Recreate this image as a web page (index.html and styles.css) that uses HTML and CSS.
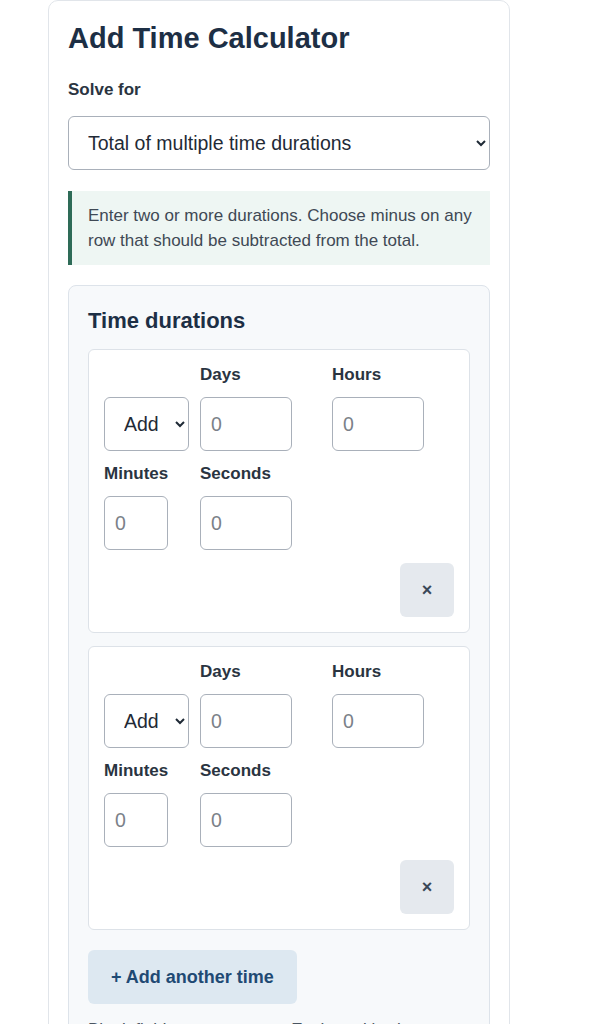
FILE: index.html
```html
<!DOCTYPE html>
<html lang="en">
<head>
<meta charset="utf-8">
<title>Add Time Calculator</title>
<link rel="stylesheet" href="styles.css">
</head>
<body>
<main class="calc">
  <h1 class="calc-title">Add Time Calculator</h1>
  <label class="field-label solve-label" for="solve">Solve for</label>
  <select id="solve" class="solve-select">
    <option>Total of multiple time durations</option>
  </select>
  <p class="info">Enter two or more durations. Choose minus on any row that should be subtracted from the total.</p>

  <section class="panel">
    <h2 class="panel-title">Time durations</h2>

    <div class="duration">
      <div class="dur-grid">
        <select class="op-select"><option>Add</option><option>Subtract</option></select>
        <div class="field"><label class="field-label">Days</label><input class="num" type="text" placeholder="0"></div>
        <div class="field"><label class="field-label">Hours</label><input class="num" type="text" placeholder="0"></div>
        <div class="field"><label class="field-label">Minutes</label><input class="num narrow" type="text" placeholder="0"></div>
        <div class="field"><label class="field-label">Seconds</label><input class="num" type="text" placeholder="0"></div>
        <button class="remove" type="button" aria-label="Remove">&times;</button>
      </div>
    </div>

    <div class="duration">
      <div class="dur-grid">
        <select class="op-select"><option>Add</option><option>Subtract</option></select>
        <div class="field"><label class="field-label">Days</label><input class="num" type="text" placeholder="0"></div>
        <div class="field"><label class="field-label">Hours</label><input class="num" type="text" placeholder="0"></div>
        <div class="field"><label class="field-label">Minutes</label><input class="num narrow" type="text" placeholder="0"></div>
        <div class="field"><label class="field-label">Seconds</label><input class="num" type="text" placeholder="0"></div>
        <button class="remove" type="button" aria-label="Remove">&times;</button>
      </div>
    </div>

    <button class="add-btn" type="button">+ Add another time</button>
    <p class="note">Blank fields count as zero. Each total is shown below.</p>
  </section>
</main>
</body>
</html>
```
FILE: styles.css
```css
* { box-sizing: border-box; }

html, body {
  margin: 0;
  padding: 0;
  background: #ffffff;
}

body {
  font-family: "Liberation Sans", Arial, sans-serif;
  color: #2a3441;
}

.calc {
  width: 462px;
  margin-left: 48px;
  border: 1px solid #e1e5ea;
  border-radius: 10px;
  padding: 20px 19px 20px;
  display: flex;
  flex-direction: column;
  min-height: 1100px;
}

.calc-title {
  margin: 0;
  font-size: 29px;
  line-height: 1.2;
  font-weight: 700;
  color: #1d2f45;
}

.field-label {
  display: block;
  font-size: 17px;
  line-height: 20px;
  font-weight: 700;
  color: #2a3441;
}

.solve-label {
  margin-top: 24px;
  margin-bottom: 16px;
}

.solve-select {
  width: 100%;
  height: 54px;
  padding: 0 14px 0 15px;
  font-family: "Liberation Sans", Arial, sans-serif;
  font-size: 19.5px;
  color: #1f2a36;
  background: #ffffff;
  border: 1px solid #a9b0ba;
  border-radius: 6px;
}

.info {
  margin: 21px 0 20px;
  padding: 12px 12px 12px 16px;
  background: #eef6f3;
  border-left: 4px solid #2e6b57;
  font-size: 17px;
  line-height: 25px;
  color: #3f4955;
}

.panel {
  background: #f7f9fb;
  border: 1px solid #dde3ea;
  border-radius: 8px;
  padding: 22px 19px 20px;
  display: flex;
  flex-direction: column;
  flex: 1;
}

.panel-title {
  margin: 0 0 15px;
  font-size: 22px;
  line-height: 1.2;
  font-weight: 700;
  color: #1d2f45;
}

.duration {
  background: #ffffff;
  border: 1px solid #dde2e8;
  border-radius: 6px;
  padding: 15px 15px 15px;
  margin-bottom: 13px;
}

.dur-grid {
  display: grid;
  grid-template-columns: 86px 122px 1fr;
  column-gap: 10px;
  row-gap: 13px;
  align-items: end;
}

.field .field-label {
  margin-bottom: 12px;
}

.op-select {
  width: 85px;
  height: 54px;
  padding: 0 6px 0 15px;
  font-family: "Liberation Sans", Arial, sans-serif;
  font-size: 19.5px;
  color: #1f2a36;
  background: #ffffff;
  border: 1px solid #a9b0ba;
  border-radius: 6px;
}

.num {
  display: block;
  width: 92px;
  height: 54px;
  padding: 0 10px;
  font-family: "Liberation Sans", Arial, sans-serif;
  font-size: 19.5px;
  color: #1f2a36;
  background: #ffffff;
  border: 1px solid #a9b0ba;
  border-radius: 6px;
}

.num.narrow {
  width: 64px;
}

.num::placeholder {
  color: #7b8189;
}

.remove {
  grid-column: 1 / -1;
  justify-self: end;
  width: 54px;
  height: 54px;
  border: none;
  border-radius: 6px;
  background: #e5e9ee;
  color: #3a4858;
  font-family: "Liberation Sans", Arial, sans-serif;
  font-size: 18px;
  font-weight: 700;
  line-height: 1;
  padding: 0;
}

.add-btn {
  align-self: flex-start;
  margin-top: 7px;
  height: 54px;
  padding: 0 23px;
  border: none;
  border-radius: 6px;
  background: #dde8f1;
  color: #1f4a74;
  font-family: "Liberation Sans", Arial, sans-serif;
  font-size: 18px;
  font-weight: 700;
}

.note {
  margin: 14px 0 0;
  font-size: 17px;
  line-height: 24px;
  color: #4a5561;
}
```
